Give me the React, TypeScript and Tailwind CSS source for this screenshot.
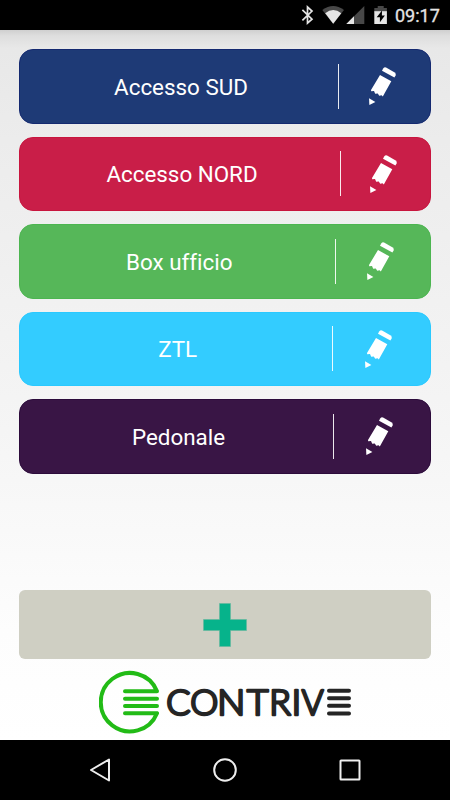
import React from 'react';

interface Gate {
  label: string;
  card: string;
  labelWidth: string;
  iconGap: string;
}

const gates: Gate[] = [
  { label: 'Accesso SUD', card: 'bg-[#1e3a76] border-[#142970]', labelWidth: 'w-[314px]', iconGap: 'ml-[28px]' },
  { label: 'Accesso NORD', card: 'bg-[#c91e48] border-[#c8153e]', labelWidth: 'w-[316px]', iconGap: 'ml-[27px]' },
  { label: 'Box ufficio', card: 'bg-[#56b759] border-[#4cb550]', labelWidth: 'w-[310.5px]', iconGap: 'ml-[29.5px]' },
  { label: 'ZTL', card: 'bg-[#33ccff] border-[#2ac9ff]', labelWidth: 'w-[307.5px]', iconGap: 'ml-[30.5px]' },
  { label: 'Pedonale', card: 'bg-[#391545] border-[#2c0b3b]', labelWidth: 'w-[309px]', iconGap: 'ml-[30px]' },
];

// left edge and advance of every letter in the wordmark
const wordmark = [
  { char: 'C', x: 67.3, width: 24.2 },
  { char: 'O', x: 91.2, width: 28 },
  { char: 'N', x: 118.2, width: 28 },
  { char: 'T', x: 148, width: 21.4 },
  { char: 'R', x: 170.3, width: 21.6 },
  { char: 'I', x: 192.5, width: 9.8 },
  { char: 'V', x: 202.8, width: 21.8 },
];

const PencilIcon: React.FC = () => (
  <svg width="30" height="40" viewBox="0 0 30 40" fill="#fff">
    <path d="M15 4.8 16.2 2.6Q17.5.6 19.5 1.7L27.3 6.2Q29.6 7.7 28.6 9.5L27.4 11.6Z" />
    <path d="M13 9 24.3 15.3 15.8 30.5 14.6 29.2 12.2 29.8 10.8 27.4 8.2 27.8 7 25 4.2 25.2 4 23.9Z" />
    <path d="M2 32.2 8.4 36 2.4 39.1Z" />
  </svg>
);

const StatusBar: React.FC = () => (
  <div className="h-[30px] shrink-0 bg-black flex items-center justify-end pr-[10px]">
    <svg width="93" height="30" viewBox="0 0 93 30">
      <path d="M2.4 9.8 12 19.2 7.5 23.2V7L12 11 2.4 20.3" fill="none" stroke="#e4e4e4" strokeWidth="1.7" />
      <path d="M22.3 10Q33.2 2 44 10L33.2 23.7Z" fill="#484848" />
      <path d="M25.2 13.2Q33.2 7 41.3 13.2L33.2 23.7Z" fill="#e6e6e6" />
      <path d="M64.3 6V24H46.3Z" fill="#484848" />
      <path d="M54 16.3V24H46.3Z" fill="#e6e6e6" />
      <path d="M74.3 8h3.4V6h6v2h3.2v4.5H74.3Z" fill="#484848" />
      <path d="M74.3 11.2h12.6V24H74.3Z" fill="#e6e6e6" />
      <path d="M82 10.5 76.7 17.2h3.2v5l5-6.7h-3Z" fill="#000" />
    </svg>
    <span className="ml-[2px] w-[45px] pt-[2px] text-[18px] leading-[28px] text-[#e4e4e4] [-webkit-text-stroke:0.3px_#e4e4e4] whitespace-nowrap">
      09:17
    </span>
  </div>
);

const GateButton: React.FC<{ gate: Gate }> = ({ gate }) => (
  <button className={`h-[74.5px] w-full flex items-center rounded-[14px] border pl-1 ${gate.card}`}>
    <span
      className={`shrink-0 pt-px text-center text-[22.4px] leading-[28px] text-white [font-variant-ligatures:none] ${gate.labelWidth}`}
    >
      {gate.label}
    </span>
    <span className="h-[45px] w-px shrink-0 bg-white/90" />
    <span className={`shrink-0 ${gate.iconGap}`}>
      <PencilIcon />
    </span>
  </button>
);

const Logo: React.FC = () => (
  <svg width="256" height="66" viewBox="0 0 256 66" className="block">
    {/* Emblem */}
    <g fill="none" stroke="#22bb16" strokeWidth="4" strokeLinecap="round" strokeLinejoin="round">
      <path d="M26 22.2H58A29.2 29.2 0 1 0 58 44.2H26" />
      <path d="M26 29.7H58M26 37H58" />
    </g>
    {/* Wordmark, the last letter is made of bars */}
    <g
      fill="#252525"
      stroke="#252525"
      strokeWidth="2.6"
      strokeLinejoin="round"
      className="font-['Lato',sans-serif] font-light"
    >
      {wordmark.map(({ char, x, width }) => (
        <text key={char} x={x} y="45.6" fontSize="34.5" textLength={width} lengthAdjust="spacingAndGlyphs">
          {char}
        </text>
      ))}
    </g>
    <path
      d="M230 21.7H250M230 29.2H250M230 36.8H250M230 44.6H250"
      stroke="#252525"
      strokeWidth="4"
      strokeLinecap="round"
    />
  </svg>
);

const NavBar: React.FC = () => (
  <div className="h-[60px] shrink-0 bg-black">
    <svg width="450" height="60" viewBox="0 0 450 60" fill="none" stroke="#eee" strokeWidth="2" strokeLinejoin="round">
      <path d="M109 19.5V40.5L91 30Z" />
      <circle cx="225" cy="30" r="10.8" />
      <rect x="340.5" y="20.5" width="19" height="19" rx=".5" />
    </svg>
  </div>
);

export default function App() {
  return (
    <div className="flex h-[800px] w-[450px] flex-col overflow-hidden font-['Roboto',sans-serif]">
      <StatusBar />
      <main className="flex flex-1 flex-col bg-[linear-gradient(to_bottom,#cfcfcf_0px,#dedede_6px,#e8e8e8_18px,#ececec_110px,#f5f5f5_400px,#fdfdfd_600px,#fff_710px)] px-[19px] pt-[19px]">
        <div className="flex flex-col gap-[13px]">
          {gates.map((gate) => (
            <GateButton key={gate.label} gate={gate} />
          ))}
        </div>
        <button className="mt-[116.5px] flex h-[69px] w-full shrink-0 items-center justify-center rounded-[6px] bg-[#cfcfc3]">
          <svg width="44" height="44" viewBox="0 0 44 44">
            <path d="M16.5.5h11v16h16v11h-16v16h-11v-16H.5v-11h16Z" fill="#06b38b" stroke="#65b79d" strokeWidth=".6" />
          </svg>
        </button>
        <div className="mt-[10px] pl-[80px]">
          <Logo />
        </div>
      </main>
      <NavBar />
    </div>
  );
}
